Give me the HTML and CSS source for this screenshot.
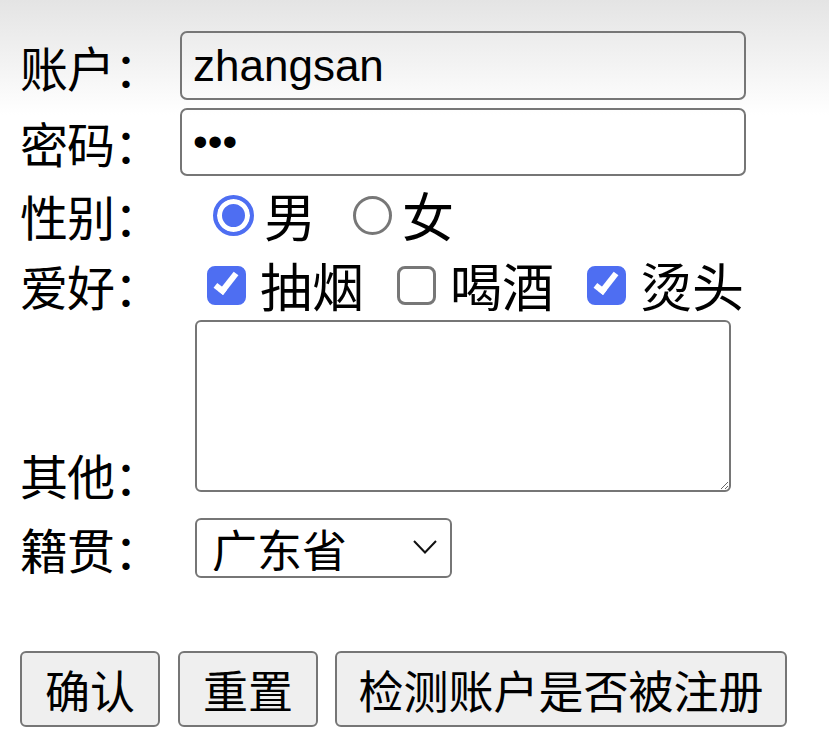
FILE: index.html
```html
<!DOCTYPE html>
<html lang="zh-CN">
<head>
    <meta charset="UTF-8">
    <meta name="viewport" content="width=device-width, initial-scale=1.0">
    <title>注册</title>
    <link rel="stylesheet" href="styles.css">
</head>
<body>
    <form class="reg-form" onsubmit="return false">
        <div class="row row-text">
            <label class="label" for="account">账户：</label>
            <input class="field" id="account" type="text" value="zhangsan">
        </div>
        <div class="row row-pwd">
            <label class="label" for="pwd">密码：</label>
            <input class="field" id="pwd" type="password" value="123">
        </div>
        <div class="row row-opts">
            <span class="label">性别：</span>
            <input class="radio first-radio" type="radio" name="sex" id="male" checked>
            <label class="opt" for="male">男</label>
            <input class="radio" type="radio" name="sex" id="female">
            <label class="opt" for="female">女</label>
        </div>
        <div class="row row-opts">
            <span class="label">爱好：</span>
            <input class="check first-check" type="checkbox" id="h1" checked>
            <label class="opt" for="h1">抽烟</label>
            <input class="check" type="checkbox" id="h2">
            <label class="opt" for="h2">喝酒</label>
            <input class="check" type="checkbox" id="h3" checked>
            <label class="opt" for="h3">烫头</label>
        </div>
        <div class="row row-area">
            <label class="label" for="other">其他：</label>
            <textarea class="area" id="other"></textarea>
        </div>
        <div class="row row-select">
            <label class="label" for="city">籍贯：</label>
            <div class="select-wrap">
                <select class="select" id="city">
                    <option>广东省</option>
                    <option>湖南省</option>
                    <option>北京市</option>
                </select>
                <svg class="chevron" width="24" height="14" viewBox="0 0 24 14">
                    <path d="M1 1 L12 12.5 L23 1" fill="none" stroke="#111" stroke-width="2"/>
                </svg>
            </div>
        </div>
        <div class="buttons">
            <button class="btn btn-short" type="submit">确认</button>
            <button class="btn btn-short" type="reset">重置</button>
            <button class="btn btn-long" type="button">检测账户是否被注册</button>
        </div>
    </form>
</body>
</html>
```

FILE: styles.css
```css
*, *::before, *::after{
    box-sizing: border-box;
    margin: 0;
    padding: 0;
}

body{
    background: #fff linear-gradient(#e4e4e4 0, #fff 115px) no-repeat;
    font-family: "Noto Sans CJK SC", "Liberation Sans", sans-serif;
    color: #000;
    padding: 31px 0 0 20px;
    min-height: 751px;
}

.row{
    display: flex;
    align-items: center;
}

.label{
    width: 160px;
    flex: none;
    font-size: 48px;
    line-height: 1;
    letter-spacing: -1px;
}

.field{
    width: 566px;
    height: 69px;
    border: 2px solid #767676;
    border-radius: 7px;
    background: transparent;
    font-family: "Liberation Sans", sans-serif;
    font-size: 44px;
    padding: 0 11px;
    color: #000;
}

.row-pwd{
    margin-top: 8px;
}

.row-pwd .field{
    height: 68px;
    font-size: 42px;
    letter-spacing: 0;
}

.row-opts{
    height: 70px;
}

.row-opts:nth-child(3){
    margin-top: 4px;
}

.opt{
    font-size: 52px;
    line-height: 1;
}

.radio, .check{
    appearance: none;
    width: 39px;
    height: 39px;
    flex: none;
    border: 3px solid #777;
    background: #fff;
    position: relative;
}

.radio{
    border-radius: 50%;
    margin: 0 10px 0 37px;
}

.radio:checked{
    border: 4px solid #4e6ef2;
    background: #4e6ef2;
    box-shadow: inset 0 0 0 5px #fff;
}

.radio.first-radio{
    width: 41px;
    height: 41px;
    margin-left: 33px;
}

.check{
    border-radius: 8px;
    margin: 0 14px 0 33px;
}

.check:checked{
    background: #4e6ef2;
    border-color: #4e6ef2;
}

.check:checked::after{
    content: "";
    position: absolute;
    left: 10px;
    top: 0;
    width: 12px;
    height: 25px;
    border-right: 6px solid #fff;
    border-bottom: 6px solid #fff;
    transform: rotate(38deg);
}

.check.first-check{
    margin-left: 27px;
}

.row-area{
    align-items: flex-end;
}

.row-area .label{
    margin-bottom: -6px;
}

.area{
    width: 536px;
    height: 172px;
    margin-left: 15px;
    border: 2px solid #767676;
    border-radius: 6px;
    background: #fff;
    resize: both;
}

.row-select{
    margin-top: 26px;
}

.select-wrap{
    position: relative;
    margin-left: 15px;
}

.select{
    appearance: none;
    width: 257px;
    height: 60px;
    border: 2px solid #767676;
    border-radius: 6px;
    background: #fff;
    font-family: "Noto Sans CJK SC", sans-serif;
    font-size: 45px;
    line-height: 1;
    padding: 0 0 0 15px;
    color: #000;
}

.chevron{
    position: absolute;
    right: 15px;
    top: 22px;
    pointer-events: none;
}

.buttons{
    display: flex;
    gap: 18px;
    margin-top: 73px;
}

.btn{
    height: 76px;
    border: 2px solid #767676;
    border-radius: 6px;
    background: #efefef;
    font-family: "Noto Sans CJK SC", sans-serif;
    font-size: 45px;
    line-height: 1;
    color: #000;
}

.btn-short{
    width: 140px;
}

.btn-long{
    width: 452px;
    margin-left: -1px;
}
```
